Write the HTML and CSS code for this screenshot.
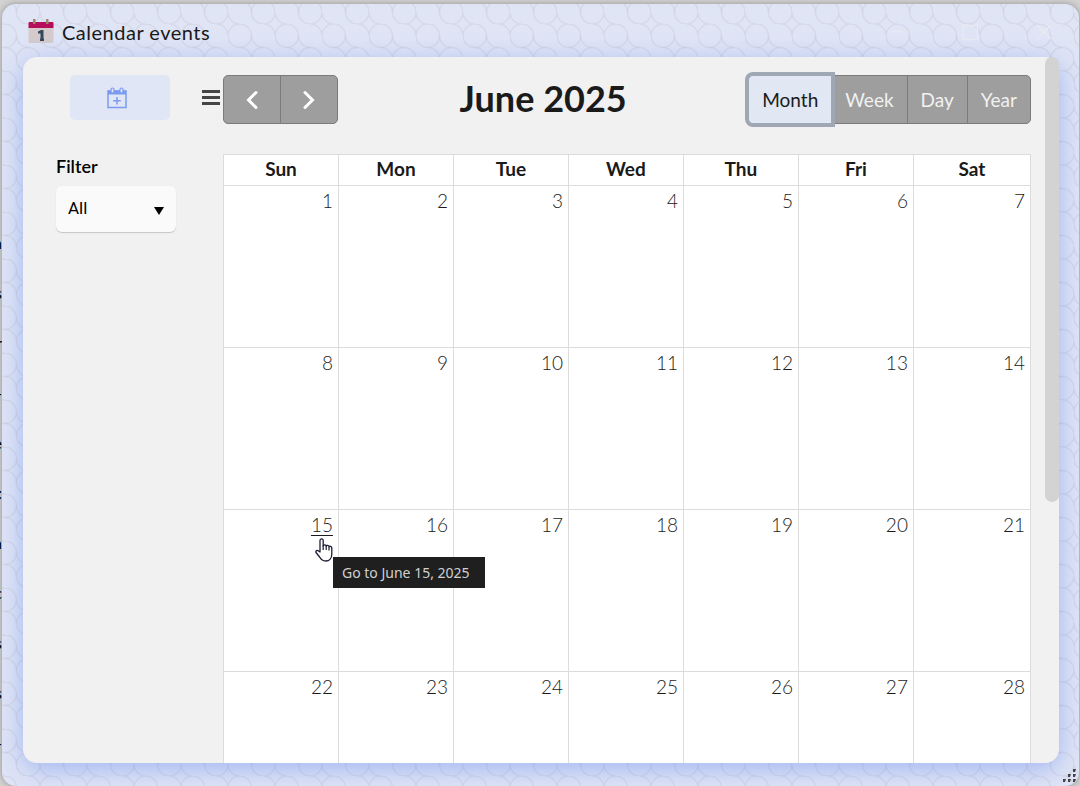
FILE: index.html
```html
<!DOCTYPE html>
<html lang="en">
<head>
    <meta charset="UTF-8">
    <meta name="viewport" content="width=device-width, initial-scale=1.0">
    <title>Calendar events</title>
    <link rel="stylesheet" href="styles.css">
</head>
<body>
    <div class="behind" aria-hidden="true">
      <span>n</span><span>s</span><span>r</span><span>-</span><span>e</span><span>:</span><span>n</span><span>c</span><span>s</span><span>s</span><span>-</span>
    </div>
    <div class="window">
      <svg class="pattern" aria-hidden="true">
        <defs>
          <pattern id="rings" x="38" y="20" width="47" height="47" patternUnits="userSpaceOnUse">
            <g fill="none" stroke="#cdd0df" stroke-opacity="0.6" stroke-width="1.6">
              <circle cx="11.75" cy="11.75" r="11.75"/>
              <circle cx="35.25" cy="35.25" r="11.75"/>
              <path d="M35.25 0A11.75 11.75 0 0 1 47 11.75M23.5 11.75A11.75 11.75 0 0 0 35.25 23.5"/>
              <path d="M11.75 23.5A11.75 11.75 0 0 1 23.5 35.25M0 35.25A11.75 11.75 0 0 0 11.75 47"/>
            </g>
          </pattern>
        </defs>
        <rect width="100%" height="100%" fill="url(#rings)"/>
      </svg>

      <header class="titlebar">
        <svg class="logo" width="26" height="26" viewBox="0 0 26 26" aria-hidden="true">
          <path d="M0.5 8h25v14.500a1.500 1.500 0 0 1-1.500 1.500H2a1.500 1.500 0 0 1-1.500-1.500z" fill="#d5cbcd"/>
          <path d="M0.500 9V4a1 1 0 0 1 1-1h23a1 1 0 0 1 1 1v5z" fill="#b50f5b"/>
          <path d="M5 0h2.500v5H5zM18 0h2.500v5H18z" fill="#a08672"/>
          <path d="M10 12.500l3-1.500h2.500v8.500H16V22h-4v-2.500h.5v-5H10z" fill="#34495e"/>
        </svg>
        <h1>Calendar events</h1>
        <div class="controls">
          <button aria-label="Minimize"><svg width="16" height="16"><path d="M1 7.500h14"/></svg></button>
          <button aria-label="Maximize"><svg width="16" height="16"><path d="M1.500 1.500h14v14h-14z"/></svg></button>
          <button aria-label="Close"><svg width="16" height="16"><path d="M1 1l14 14M15 1L1 15"/></svg></button>
        </div>
      </header>

      <main class="panel">
        <aside class="sidebar">
          <div class="actions">
            <button class="add" aria-label="Add event">
              <svg width="20" height="22" viewBox="0 0 20 22" fill="none" stroke="#7a9bf0">
                <path d="M1 4h18v16.500H1z" stroke-width="1.500"/>
                <path d="M1 3.500h18v4H1z" fill="#7a9bf0" stroke="none"/>
                <rect x="4" y="1" width="3" height="5" rx="1.500" fill="#e0e6f6" stroke-width="1.200"/>
                <rect x="13" y="1" width="3" height="5" rx="1.500" fill="#e0e6f6" stroke-width="1.200"/>
                <path d="M10 10v7.500M6.200 13.700h7.600" stroke-width="1.500"/>
              </svg>
            </button>
            <button class="ham" aria-label="Toggle sidebar">
              <svg width="18" height="16" viewBox="0 0 18 16"><path d="M0 0h18v3H0zM0 6h18v3H0zM0 12h18v3H0z" fill="#454545"/></svg>
            </button>
          </div>
          <div class="filter">
            <label for="filter">Filter</label>
            <div class="select">
              <select id="filter"><option>All</option></select>
              <svg width="10" height="8"><path d="M0 0h10L5 8z" fill="#000"/></svg>
            </div>
          </div>
        </aside>

        <section class="calendar">
          <div class="toolbar">
            <div class="group nav">
              <button aria-label="Previous month"><svg width="12" height="20"><path d="M10 2.500L2.500 10l7.500 7.500"/></svg></button>
              <button aria-label="Next month"><svg width="12" height="20"><path d="M2 2.500L9.500 10 2 17.500"/></svg></button>
            </div>
            <h2>June 2025</h2>
            <div class="group views">
              <button class="active">Month</button>
              <button>Week</button>
              <button>Day</button>
              <button>Year</button>
            </div>
          </div>

          <table>
            <thead>
              <tr><th>Sun</th><th>Mon</th><th>Tue</th><th>Wed</th><th>Thu</th><th>Fri</th><th>Sat</th></tr>
            </thead>
            <tbody>
              <tr>
                <td><a href="#">1</a></td><td><a href="#">2</a></td><td><a href="#">3</a></td><td><a href="#">4</a></td><td><a href="#">5</a></td><td><a href="#">6</a></td><td><a href="#">7</a></td>
              </tr>
              <tr>
                <td><a href="#">8</a></td><td><a href="#">9</a></td><td><a href="#">10</a></td><td><a href="#">11</a></td><td><a href="#">12</a></td><td><a href="#">13</a></td><td><a href="#">14</a></td>
              </tr>
              <tr>
                <td class="hovered">
                  <a href="#" aria-describedby="tip">15</a>
                  <svg class="pointer" width="18" height="24" viewBox="0 0 18 24" aria-hidden="true">
                    <path d="M5 14V2.500a1.600 1.600 0 0 1 3.200 0V8c.2-1.600 3-1.400 3 .2.300-1.200 2.700-1 2.800.6.400-1 2.800-.7 2.800 1.200v6c0 4-2.300 7-6 7-3.300 0-4.800-1.500-6.200-4L1 14.500c-.6-1.700 1.300-2.700 2.500-1.500z" fill="#fff" stroke="#1c1c34" stroke-width="1.300" stroke-linejoin="round"/>
                    <path d="M8.200 7.500V12M11.200 8v4M14 9v3.500" fill="none" stroke="#1c1c34" stroke-width="1.200"/>
                  </svg>
                  <span class="tooltip" id="tip" role="tooltip">Go to June 15, 2025</span>
                </td>
                <td><a href="#">16</a></td><td><a href="#">17</a></td><td><a href="#">18</a></td><td><a href="#">19</a></td><td><a href="#">20</a></td><td><a href="#">21</a></td>
              </tr>
              <tr>
                <td><a href="#">22</a></td><td><a href="#">23</a></td><td><a href="#">24</a></td><td><a href="#">25</a></td><td><a href="#">26</a></td><td><a href="#">27</a></td><td><a href="#">28</a></td>
              </tr>
            </tbody>
          </table>
        </section>

        <div class="scroll"><div class="thumb"></div></div>
      </main>

      <svg class="grip" width="14" height="14" aria-hidden="true">
        <path d="M11 0h3l-1 3h-2zM6 5h3l-1 3H6zM11 5h3l-1 3h-2zM1 10h3l-1 3H1zM6 10h3l-1 3H6zM11 10h3l-1 3h-2z" fill="#444"/>
      </svg>
    </div>
</body>
</html>
```
FILE: styles.css
```css
* {
  box-sizing: border-box;
}
body {
  margin: 0;
  height: 100vh;
  display: grid;
  grid-template-columns: 2px 1fr;
  overflow: hidden;
  background: #d2d2d2;
  font-family: Lato, "Open Sans", sans-serif;
  color: #1a1a1a;
}
button {
  font: inherit;
  border: none;
  background: none;
  padding: 0;
}
.behind {
  padding-top: 218px;
  overflow: hidden;
  display: flex;
  flex-direction: column;
  align-items: flex-end;
  font-size: 16px;
  line-height: 50px;
  color: #000;
}
.window {
  position: relative;
  display: flex;
  flex-direction: column;
  margin: 4px 1px 0 0;
  padding: 0 20px 23px 21px;
  border-radius: 14px;
  overflow: hidden;
  background: #e0e5f6;
  box-shadow: 0 0 6px rgba(0, 0, 0, 0.3);
}
.pattern {
  position: absolute;
  top: 0;
  left: 0;
  width: 100%;
  height: 100%;
}

/* title bar */
.titlebar {
  position: relative;
  display: flex;
  align-items: center;
  height: 53px;
  padding: 2px 7px 0 5px;
}
.titlebar h1 {
  flex-grow: 1;
  margin: 0 0 0 8px;
  font-size: 20px;
  line-height: 24px;
  font-weight: 400;
  letter-spacing: 0.5px;
}
.controls {
  display: flex;
  gap: 58px;
}
.controls button {
  display: flex;
}
.controls path {
  fill: none;
  stroke: #e9eaf0;
  stroke-width: 1.5;
}

/* main panel */
.panel {
  position: relative;
  flex: 1;
  min-height: 0;
  display: flex;
  border-radius: 14px;
  background: #f1f1f1;
  box-shadow: 0 6px 26px rgba(100, 135, 235, 0.5);
}
.sidebar {
  flex: 0 0 200px;
  padding-top: 18px;
}
.actions {
  display: flex;
  align-items: center;
  justify-content: space-between;
  padding: 0 3px 0 47px;
}
.add {
  display: flex;
  align-items: center;
  justify-content: center;
  width: 100px;
  height: 45px;
  padding-right: 6px;
  border-radius: 5px;
  background: #e0e6f6;
}
.ham {
  display: flex;
}
.filter {
  width: 120px;
  margin: 35px 0 0 33px;
}
.filter label {
  display: block;
  margin-bottom: 9px;
  font-size: 18px;
  line-height: 22px;
  font-weight: 600;
  color: #000;
}
.select {
  display: grid;
  align-items: center;
}
.select select, .select svg {
  grid-area: 1 / 1;
}
.select select {
  appearance: none;
  width: 100%;
  height: 46px;
  padding: 0 12px 2px;
  border: none;
  border-radius: 6px;
  background: #fafafa;
  box-shadow: 0 1px 1px rgba(0, 0, 0, 0.18);
  font: 17px Roboto, sans-serif;
  color: #000;
}
.select svg {
  justify-self: end;
  margin: 4px 12px 0 0;
  pointer-events: none;
}

/* calendar */
.calendar {
  flex: 1;
  min-width: 0;
  padding: 18px 14px 0 0;
  overflow: hidden;
}
.toolbar {
  display: flex;
  align-items: center;
  justify-content: space-between;
  margin-bottom: 30px;
}
.toolbar h2 {
  margin: 0;
  padding-bottom: 4px;
  font-size: 36px;
  line-height: 44px;
  font-weight: 700;
}
.group {
  display: flex;
  height: 49px;
}
.group button {
  display: flex;
  align-items: center;
  justify-content: center;
  padding: 0 13px;
  border: 1px solid #7b7b7b;
  background: #9e9e9e;
  color: #f1f1f1;
  font-size: 19px;
}
.group button + button {
  margin-left: -1px;
}
.group button:first-child {
  border-radius: 5px 0 0 5px;
}
.group button:last-child {
  border-radius: 0 5px 5px 0;
}
.nav button {
  width: 58px;
}
.nav path {
  fill: none;
  stroke: #fff;
  stroke-width: 3;
  stroke-linecap: round;
}
.views .active {
  position: relative;
  background: #e1e7f3;
  border-color: #9ea9b6;
  box-shadow: 0 0 0 3px #9ea7b3;
  color: #1a1a1a;
}
table {
  width: 100%;
  table-layout: fixed;
  border-collapse: collapse;
  background: #fff;
}
th, td {
  border: 1px solid #dcdcdc;
}
th {
  height: 31px;
  padding: 0 0 2px;
  font-size: 19px;
  line-height: 24px;
  font-weight: 700;
}
th:not(:last-child) {
  width: 14.25%;
}
td {
  height: 162px;
  padding: 3px 5px;
  text-align: right;
  vertical-align: top;
  font-size: 19px;
  line-height: 24px;
  font-weight: 300;
}
td a {
  color: #1a1a1a;
  text-decoration: none;
}
.hovered {
  position: relative;
}
.hovered a {
  text-decoration: underline;
  text-underline-offset: 3px;
}
.pointer {
  position: absolute;
  top: 28px;
  right: 5px;
}
.tooltip {
  position: absolute;
  top: 47px;
  left: 109px;
  z-index: 1;
  padding: 0 15px 0 9px;
  background: #1f1f1f;
  color: #d0d0d0;
  font: 14px/31px "Noto Sans", sans-serif;
  white-space: nowrap;
}
.scroll {
  width: 14px;
}
.thumb {
  height: 63%;
  border-radius: 7px;
  background: #d3d3d3;
}
.grip {
  position: absolute;
  right: 3px;
  bottom: 3px;
}
```
